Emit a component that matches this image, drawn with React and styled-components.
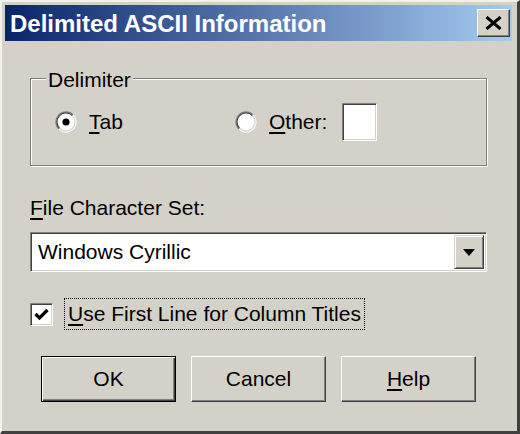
import styled, { createGlobalStyle } from "styled-components"

const GlobalStyle = createGlobalStyle`
    body {
        margin: 0;
        background: #d4d1c9;
        font-family: "Liberation Sans", Arial, sans-serif;
    }
    * {
        box-sizing: border-box;
    }
`

const App = () => {
    return <>
        <GlobalStyle />
        <Window>
            <TitleBar>
                <Title>Delimited ASCII Information</Title>
                <CloseButton aria-label="Close">
                    <svg width="17" height="14" viewBox="0 0 17 14">
                        <path d="M1.5 1 L15.5 13 M15.5 1 L1.5 13" stroke="#000" strokeWidth="3" />
                    </svg>
                </CloseButton>
            </TitleBar>
            <Content>
                <Group>
                    <Legend>Delimiter</Legend>
                    <OptionRow>
                        <Option $width="180px">
                            <Radio checked />
                            <span><Key>T</Key>ab</span>
                        </Option>
                        <Option>
                            <Radio />
                            <span><Key>O</Key>ther:</span>
                            <SmallEdit />
                        </Option>
                    </OptionRow>
                </Group>

                <FieldLabel><Key>F</Key>ile Character Set:</FieldLabel>
                <Combo>
                    <ComboText>Windows Cyrillic</ComboText>
                    <ArrowButton>
                        <svg width="12" height="7" viewBox="0 0 12 7">
                            <path d="M0 0 L12 0 L6 7 Z" fill="#000" />
                        </svg>
                    </ArrowButton>
                </Combo>

                <CheckRow>
                    <CheckBox>
                        <svg width="15" height="13" viewBox="0 0 15 13">
                            <path d="M1.5 6 L5.5 10 L13.5 2" stroke="#000" strokeWidth="3.2" fill="none" />
                        </svg>
                    </CheckBox>
                    <FocusLabel><Key>U</Key>se First Line for Column Titles</FocusLabel>
                </CheckRow>

                <ButtonRow>
                    <Button $default>OK</Button>
                    <Button>Cancel</Button>
                    <Button><Key>H</Key>elp</Button>
                </ButtonRow>
            </Content>
        </Window>
    </>
}

const Radio = ({ checked }) => (
    <RadioWrap>
        <svg width="22" height="22" viewBox="0 0 22 22">
            <circle cx="11" cy="11" r="10" fill="#fff" />
            <path d="M3.9 18.1 A10 10 0 0 1 18.1 3.9" stroke="#808080" strokeWidth="1.2" fill="none" />
            <path d="M18.1 3.9 A10 10 0 0 1 3.9 18.1" stroke="#fff" strokeWidth="1.2" fill="none" />
            <path d="M4.6 17.4 A9 9 0 0 1 17.4 4.6" stroke="#404040" strokeWidth="1.2" fill="none" />
            <path d="M17.4 4.6 A9 9 0 0 1 4.6 17.4" stroke="#d4d1c9" strokeWidth="1.2" fill="none" />
            {checked && <circle cx="11" cy="11" r="3.6" fill="#000" />}
        </svg>
    </RadioWrap>
)

const Window = styled.div`
    width: 520px;
    height: 434px;
    background: #d4d1c9;
    border-style: solid;
    border-width: 2px 3px 3px 2px;
    border-color: #f2f1ed #404040 #404040 #f2f1ed;
    padding: 3px 5px 0 3px;
    display: flex;
    flex-direction: column;
    font-size: 21px;
    color: #000;
`

const TitleBar = styled.div`
    height: 36px;
    display: flex;
    align-items: center;
    justify-content: space-between;
    padding: 0 2px 0 5px;
    background: linear-gradient(to right, #0a246a, #a6caf0);
`

const Title = styled.div`
    font-weight: 700;
    font-size: 24px;
    line-height: 1;
    padding-top: 2px;
    color: #fff;
`

const CloseButton = styled.button`
    width: 33px;
    height: 28px;
    padding: 0;
    display: flex;
    align-items: center;
    justify-content: center;
    background: #d4d1c9;
    border: 1px solid;
    border-color: #fff #404040 #404040 #fff;
    box-shadow: inset -1px -1px 0 #808080;
`

const Content = styled.div`
    padding: 24px 25px 0 25px;
    display: flex;
    flex-direction: column;
`

const Group = styled.fieldset`
    margin: 0;
    min-width: 0;
    padding: 12px 24px 24px 24px;
    border: 1px solid #808080;
    box-shadow: inset 1px 1px 0 #fff, 1px 1px 0 #fff;
`

const Legend = styled.legend`
    margin-left: -9px;
    padding: 4px 2px 0 2px;
    font-size: 21px;
    line-height: 22px;
    background: #d4d1c9;
`

const OptionRow = styled.div`
    display: flex;
    align-items: center;
    height: 38px;
`

const Option = styled.label`
    display: flex;
    align-items: center;
    gap: 12px;
    width: ${(p) => p.$width || "auto"};
`

const RadioWrap = styled.span`
    display: flex;
    width: 22px;
    height: 22px;
`

const Key = styled.span`
    text-decoration: underline;
    text-underline-offset: 3px;
`

const SmallEdit = styled.div`
    width: 35px;
    height: 38px;
    margin-left: 3px;
    background: #fff;
    border: 1px solid;
    border-color: #808080 #fff #fff #808080;
    box-shadow: inset 1px 1px 0 #404040, inset -1px -1px 0 #d4d1c9;
`

const FieldLabel = styled.div`
    margin-top: 30px;
    line-height: 24px;
`

const Combo = styled.div`
    margin-top: 12px;
    height: 40px;
    display: flex;
    align-items: stretch;
    padding: 2px;
    background: #fff;
    border: 1px solid;
    border-color: #808080 #fff #fff #808080;
    box-shadow: inset 1px 1px 0 #404040, inset -1px -1px 0 #d4d1c9;
`

const ComboText = styled.div`
    flex: 1;
    display: flex;
    align-items: center;
    padding-left: 5px;
`

const ArrowButton = styled.div`
    width: 30px;
    display: flex;
    align-items: center;
    justify-content: center;
    background: #d4d1c9;
    border: 1px solid;
    border-color: #d4d1c9 #404040 #404040 #d4d1c9;
    box-shadow: inset 1px 1px 0 #fff, inset -1px -1px 0 #808080;
`

const CheckRow = styled.div`
    margin-top: 26px;
    display: flex;
    align-items: center;
    gap: 11px;
`

const CheckBox = styled.div`
    width: 23px;
    height: 23px;
    display: flex;
    align-items: center;
    justify-content: center;
    background: #fff;
    border: 1px solid;
    border-color: #808080 #fff #fff #808080;
    box-shadow: inset 1px 1px 0 #404040, inset -1px -1px 0 #d4d1c9;
`

const FocusLabel = styled.div`
    border: 1px dotted #000;
    padding: 0 3px;
    line-height: 30px;
`

const ButtonRow = styled.div`
    margin-top: 26px;
    display: flex;
    justify-content: center;
    gap: 15px;
`

const Button = styled.button`
    width: 135px;
    height: 46px;
    padding: 0;
    font-family: inherit;
    font-size: 21px;
    color: #000;
    background: #d4d1c9;
    border: 1px solid;
    border-color: ${(p) => (p.$default ? "#000" : "#fff #404040 #404040 #fff")};
    box-shadow: ${(p) =>
        p.$default
            ? "inset 1px 1px 0 #fff, inset -1px -1px 0 #404040, inset -2px -2px 0 #808080"
            : "inset -1px -1px 0 #808080"};
`

export default App
